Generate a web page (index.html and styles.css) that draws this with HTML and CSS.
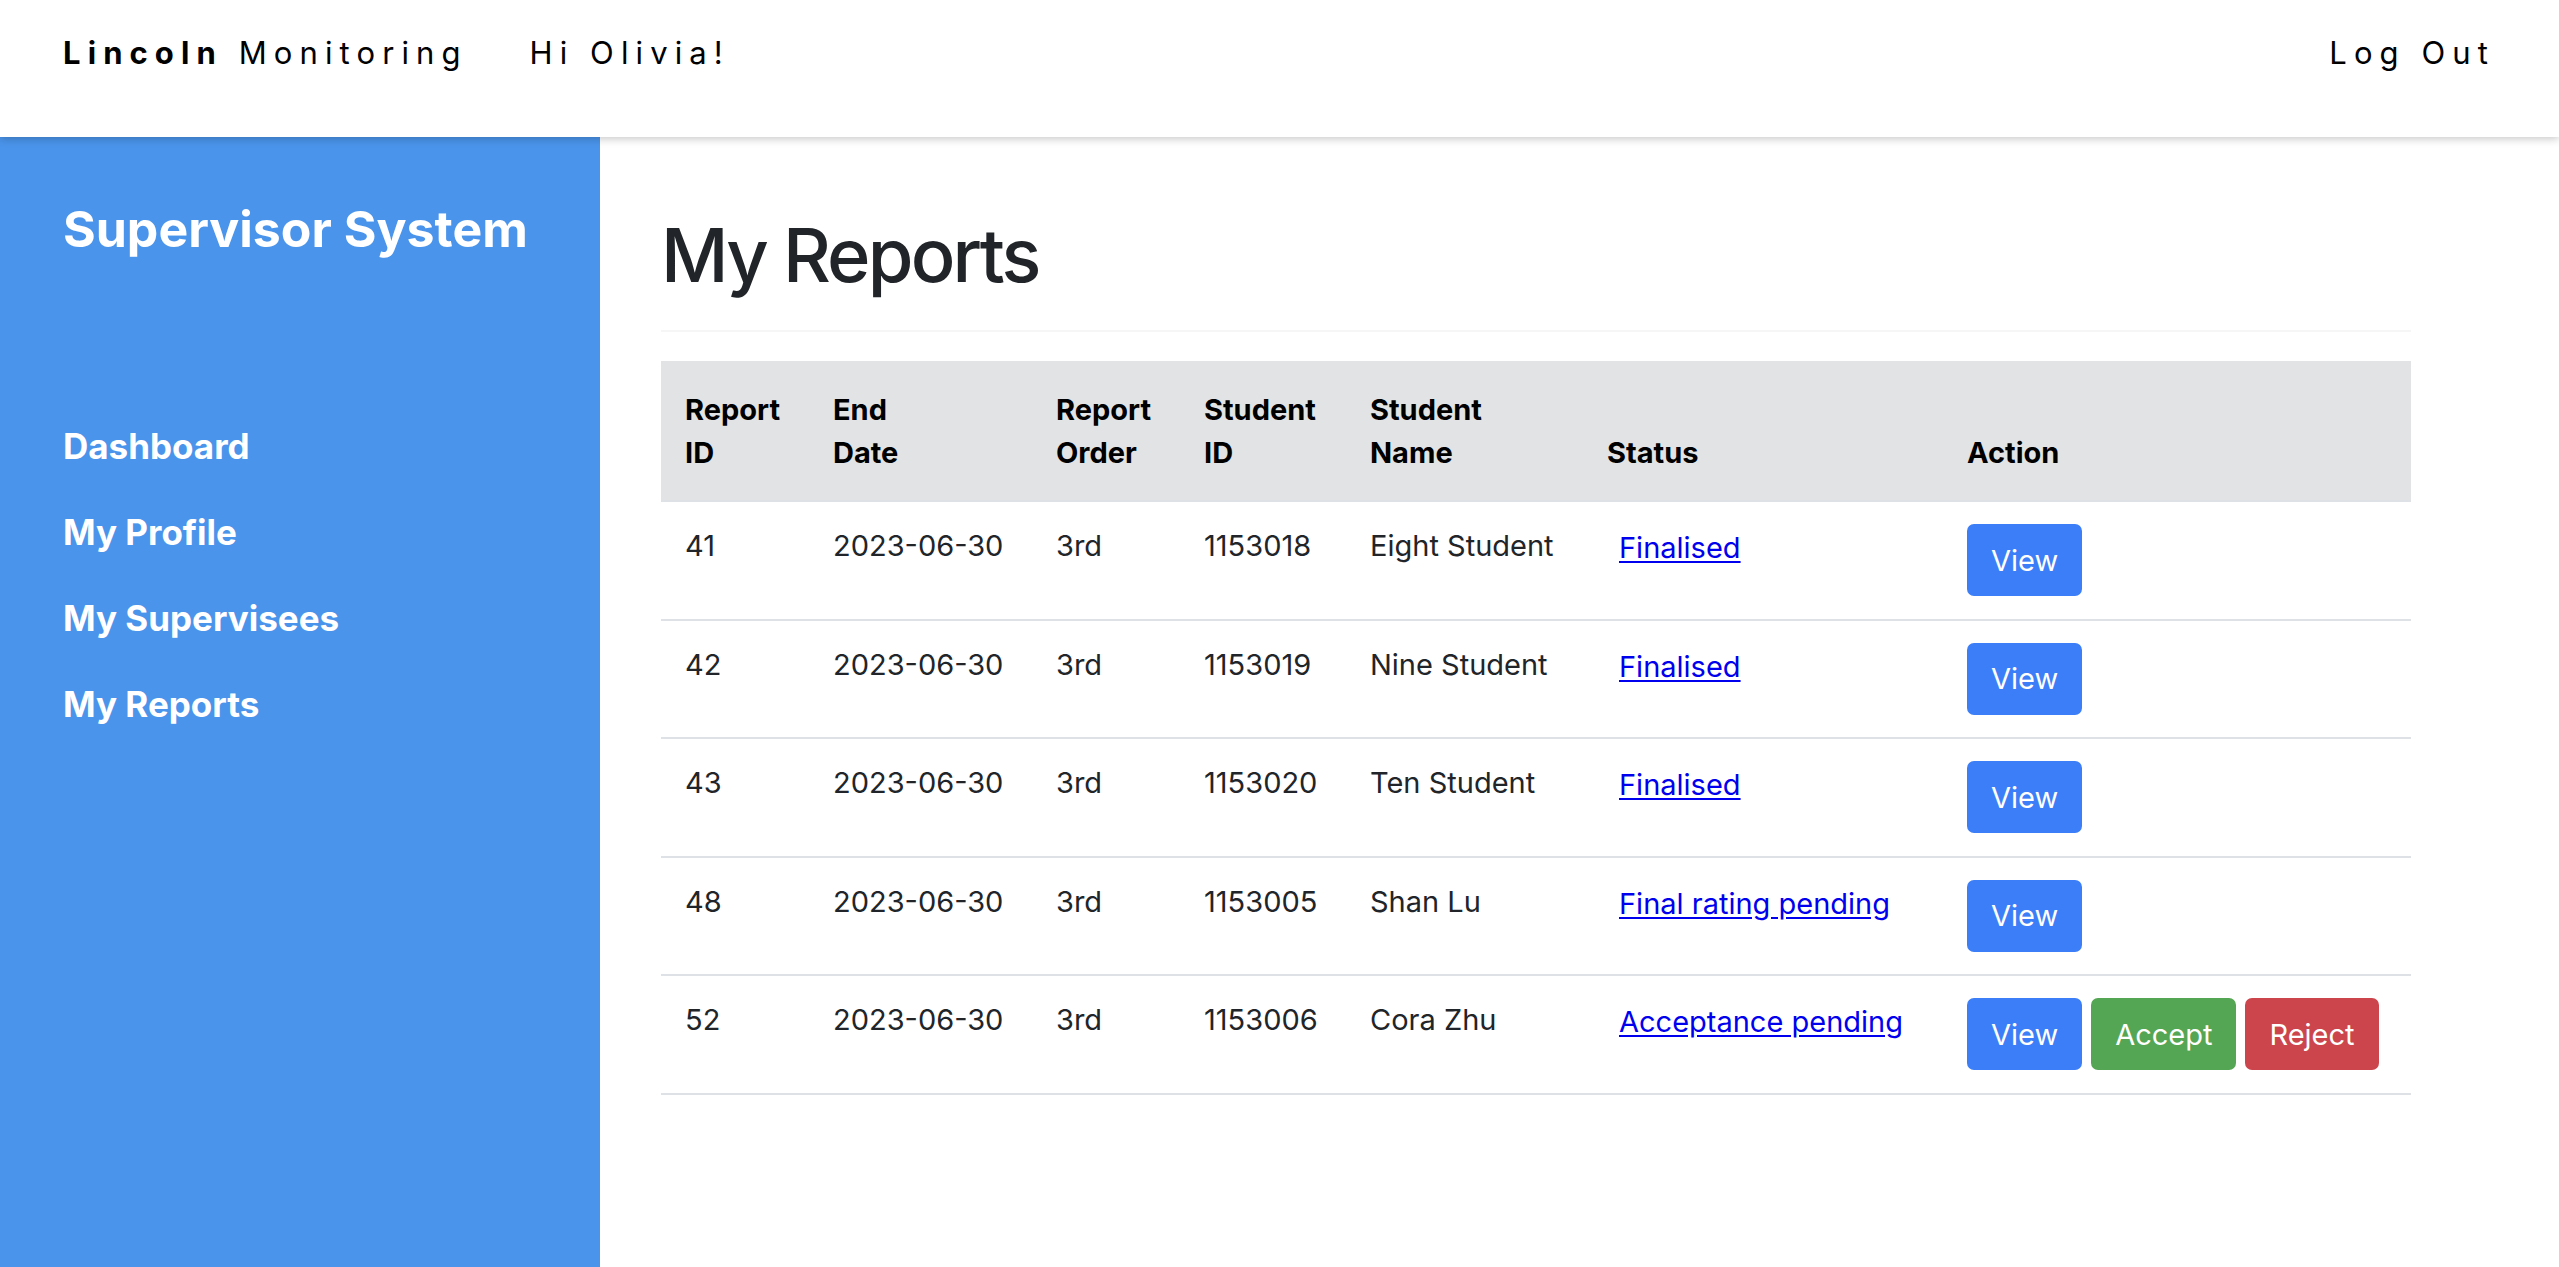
FILE: index.html
```
<!DOCTYPE html>
<html lang="en">
<head>
<meta charset="utf-8">
<title>My Reports - Lincoln Monitoring</title>
<link rel="stylesheet" href="styles.css">
</head>
<body>
<header class="topbar">
  <div class="topbar-left">
    <a class="brand" href="#"><strong>Lincoln</strong> Monitoring</a>
    <span class="greeting">Hi Olivia!</span>
  </div>
  <a class="logout" href="#">Log Out</a>
</header>
<div class="layout">
  <aside class="sidebar">
    <h2 class="sidebar-title">Supervisor System</h2>
    <nav class="sidebar-nav">
      <a href="#">Dashboard</a>
      <a href="#">My Profile</a>
      <a href="#">My Supervisees</a>
      <a href="#">My Reports</a>
    </nav>
  </aside>
  <main class="content">
    <h1 class="page-title">My Reports</h1>
    <hr class="divider">
    <table class="reports">
      <colgroup>
        <col class="c1"><col class="c2"><col class="c3"><col class="c4"><col class="c5"><col class="c6"><col class="c7">
      </colgroup>
      <thead>
        <tr>
          <th>Report<br>ID</th>
          <th>End<br>Date</th>
          <th>Report<br>Order</th>
          <th>Student<br>ID</th>
          <th>Student<br>Name</th>
          <th>Status</th>
          <th>Action</th>
        </tr>
      </thead>
      <tbody>
        <tr>
          <td>41</td><td>2023-06-30</td><td>3rd</td><td>1153018</td><td>Eight Student</td>
          <td><a class="status" href="#">Finalised</a></td>
          <td><div class="actions"><button class="btn btn-view">View</button></div></td>
        </tr>
        <tr>
          <td>42</td><td>2023-06-30</td><td>3rd</td><td>1153019</td><td>Nine Student</td>
          <td><a class="status" href="#">Finalised</a></td>
          <td><div class="actions"><button class="btn btn-view">View</button></div></td>
        </tr>
        <tr>
          <td>43</td><td>2023-06-30</td><td>3rd</td><td>1153020</td><td>Ten Student</td>
          <td><a class="status" href="#">Finalised</a></td>
          <td><div class="actions"><button class="btn btn-view">View</button></div></td>
        </tr>
        <tr>
          <td>48</td><td>2023-06-30</td><td>3rd</td><td>1153005</td><td>Shan Lu</td>
          <td><a class="status" href="#">Final rating pending</a></td>
          <td><div class="actions"><button class="btn btn-view">View</button></div></td>
        </tr>
        <tr>
          <td>52</td><td>2023-06-30</td><td>3rd</td><td>1153006</td><td>Cora Zhu</td>
          <td><a class="status" href="#">Acceptance pending</a></td>
          <td><div class="actions"><button class="btn btn-view">View</button><button class="btn btn-accept">Accept</button><button class="btn btn-reject">Reject</button></div></td>
        </tr>
      </tbody>
    </table>
  </main>
</div>
</body>
</html>
```
FILE: styles.css
```
* { box-sizing: border-box; }
html, body { margin: 0; padding: 0; }
body {
  font-family: Inter, "Noto Sans", "Liberation Sans", sans-serif;
  color: #212529;
  background: #fff;
  height: 100vh;
  display: flex;
  flex-direction: column;
  overflow: hidden;
}

.topbar {
  height: 137px;
  flex: 0 0 137px;
  display: flex;
  justify-content: space-between;
  align-items: flex-start;
  padding: 30px 64px 0 63px;
  background: #fff;
  box-shadow: 0 2px 8px rgba(0, 0, 0, 0.22);
  position: relative;
  z-index: 2;
  font-size: 31px;
  line-height: 46px;
  letter-spacing: 7.1px;
}
.topbar a { color: #000; text-decoration: none; }
.topbar-left { display: flex; }
.brand { font-weight: 400; }
.brand strong { font-weight: 700; }
.greeting { margin-left: 62px; color: #000; }
.logout { color: #000; }

.layout {
  flex: 1;
  display: flex;
  min-height: 0;
}
.sidebar {
  width: 600px;
  flex: 0 0 600px;
  background: #4a94eb;
  color: #fff;
  padding: 62px 40px 0 63px;
}
.sidebar-title {
  margin: 0;
  font-size: 50px;
  line-height: 60px;
  font-weight: 700;
}
.sidebar-nav {
  margin-top: 161px;
  display: flex;
  flex-direction: column;
  gap: 34px;
}
.sidebar-nav a {
  color: #fff;
  text-decoration: none;
  font-weight: 700;
  font-size: 35px;
  line-height: 52px;
}

.content {
  flex: 1;
  padding: 73px 148px 0 61px;
}
.page-title {
  margin: 0;
  font-size: 74px;
  line-height: 91px;
  font-weight: 500;
  letter-spacing: -2.8px;
  color: #212529;
}
.divider {
  margin: 29px 0 29px 0;
  border: 0;
  border-top: 2px solid #f6f6f6;
}

.reports {
  width: 1750px;
  table-layout: fixed;
  border-collapse: collapse;
  font-size: 29px;
  line-height: 43px;
}
.c1 { width: 148px; }
.c2 { width: 223px; }
.c3 { width: 148px; }
.c4 { width: 166px; }
.c5 { width: 237px; }
.c6 { width: 360px; }
.c7 { width: 468px; }

.reports th {
  background: #e2e3e5;
  color: #000;
  text-align: left;
  font-weight: 700;
  vertical-align: bottom;
  padding: 27px 24px 26px;
  border-bottom: 2px solid #dee2e6;
}
.reports td {
  vertical-align: top;
  padding: 22px 24px 22.5px;
  border-bottom: 2px solid #dee2e6;
  color: #212529;
  white-space: nowrap;
}
.status {
  display: inline-block;
  color: #0000ee;
  text-decoration: underline;
  text-underline-offset: 3px;
  padding: 2px 0 0 12px;
}
.actions {
  display: flex;
  gap: 9px;
}
.btn {
  font-family: inherit;
  font-size: 29px;
  line-height: 43px;
  padding: 14.5px 24px;
  border: 0;
  border-radius: 7px;
  color: #fff;
  cursor: pointer;
}
.btn-view { background: #3b7ef7; }
.btn-accept { background: #54a654; }
.btn-reject { background: #cc454d; }
```
